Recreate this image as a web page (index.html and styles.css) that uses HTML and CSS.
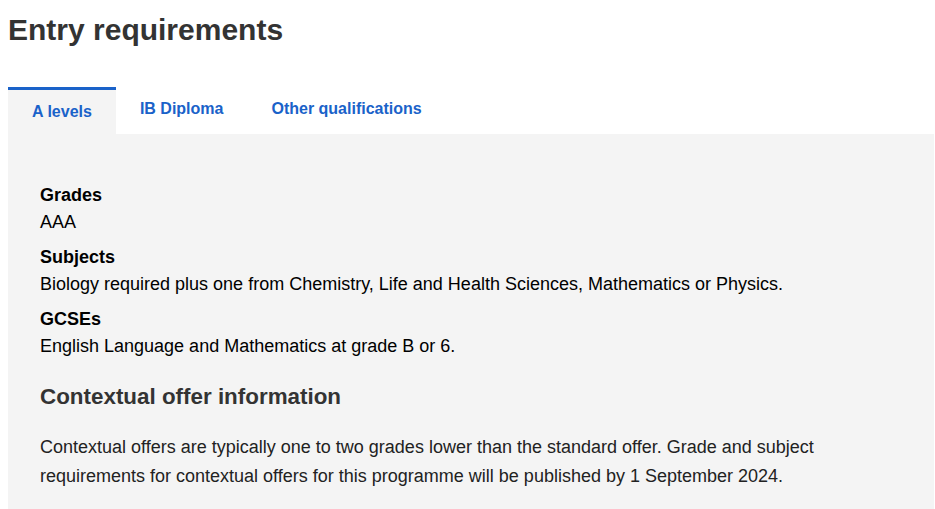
FILE: index.html
```html
<!DOCTYPE html>
<html lang="en">
<head>
<meta charset="utf-8">
<title>Entry requirements</title>
<link rel="stylesheet" href="styles.css">
</head>
<body>
<main class="page">
  <h1 class="title">Entry requirements</h1>
  <div class="tabs">
    <a class="tab tab-active" href="#">A levels</a>
    <a class="tab" href="#">IB Diploma</a>
    <a class="tab" href="#">Other qualifications</a>
  </div>
  <section class="panel">
    <dl class="reqs">
      <dt>Grades</dt>
      <dd>AAA</dd>
      <dt>Subjects</dt>
      <dd>Biology required plus one from Chemistry, Life and Health Sciences, Mathematics or Physics.</dd>
      <dt>GCSEs</dt>
      <dd>English Language and Mathematics at grade B or 6.</dd>
    </dl>
    <h3 class="subhead">Contextual offer information</h3>
    <p class="text">Contextual offers are typically one to two grades lower than the standard offer. Grade and subject requirements for contextual offers for this programme will be published by 1 September 2024.</p>
  </section>
</main>
</body>
</html>
```
FILE: styles.css
```css
html, body {
  margin: 0;
  padding: 0;
  background: #ffffff;
}
body {
  font-family: "Liberation Sans", Arial, sans-serif;
  color: #000;
  padding: 0 1px 0 8px;
}
.title {
  margin: 11px 0 0 0;
  font-size: 30px;
  line-height: 38px;
  font-weight: bold;
  color: #333333;
}
.tabs {
  display: flex;
  align-items: flex-start;
  margin-top: 38px;
}
.tab {
  display: block;
  padding: 10px 24px;
  font-size: 16px;
  line-height: 24px;
  font-weight: bold;
  color: #1a62c9;
  text-decoration: none;
}
.tab-active {
  background: #f4f4f4;
  border-top: 3px solid #1a62c9;
}
.panel {
  background: #f4f4f4;
  padding: 48px 32px 30px 32px;
}
.reqs {
  margin: 0;
}
.reqs dt {
  font-weight: bold;
  font-size: 18px;
  line-height: 27px;
}
.reqs dd {
  margin: 0 0 8px 0;
  font-size: 18px;
  line-height: 27px;
}
.subhead {
  margin: 23px 0 0 0;
  font-size: 22.4px;
  line-height: 28px;
  font-weight: bold;
  color: #333333;
}
.text {
  margin: 22px 0 0 0;
  font-size: 18px;
  line-height: 29px;
  color: #222222;
}
```
